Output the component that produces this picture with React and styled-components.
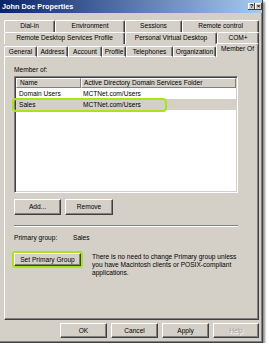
import React from 'react';
import styled, { createGlobalStyle } from 'styled-components';

const Global = createGlobalStyle`
  html, body { margin: 0; padding: 0; background: #ffffff; }
  body {
    font-family: "Liberation Sans", Arial, sans-serif;
    font-size: 6.6px;
    color: #000;
  }
  * { box-sizing: border-box; }
`;

const Window = styled.div`
  width: 263px;
  height: 343px;
  background: #d4d0c8;
  border-right: 1px solid #404040;
  border-bottom: 1px solid #404040;
  box-shadow: inset -1px -1px 0 #808080, 2px 2px 2px rgba(0, 0, 0, 0.45);
  display: flex;
  flex-direction: column;
`;

const TitleBar = styled.div`
  height: 13px;
  flex: none;
  display: flex;
  align-items: center;
  justify-content: space-between;
  padding: 0 0 0 2px;
  background: linear-gradient(to right, #0a246a, #a6caf0);
`;

const Title = styled.span`
  color: #fff;
  font-weight: bold;
  font-size: 7.3px;
  line-height: 13px;
`;

const CaptionButtons = styled.div`
  display: flex;
`;

const CaptionButton = styled.div`
  width: 7px;
  height: 7px;
  background: #d4d0c8;
  box-shadow: inset -1px -1px 0 #404040, inset 1px 1px 0 #fff;
  font-size: 6px;
  font-weight: bold;
  line-height: 7px;
  text-align: center;
`;

const Body = styled.div`
  flex: 1;
  display: flex;
  flex-direction: column;
  padding: 7px 3px 0 4px;
`;

const TabStrip = styled.div`
  display: flex;
  flex-direction: column;
  width: 255px;
`;

const TabRow = styled.div`
  display: flex;
  height: ${p => p.$h || 12}px;
  align-items: flex-end;
`;

const Tab = styled.div`
  width: ${p => p.$w}px;
  height: ${p => (p.$selected ? 14 : p.$front ? 11 : 12)}px;
  border-top: 1px solid #fff;
  border-left: 1px solid #fff;
  border-right: 1px solid #404040;
  border-bottom: ${p => (p.$front && !p.$selected ? '1px solid #fff' : 'none')};
  border-top-left-radius: 2px;
  border-top-right-radius: 2px;
  box-shadow: inset -1px 0 0 #808080;
  text-align: center;
  line-height: ${p => (p.$selected ? 9 : 10)}px;
  white-space: nowrap;
  overflow: hidden;
  background: #d4d0c8;
`;

const Panel = styled.div`
  width: 255px;
  height: 263px;
  border-left: 1px solid #fff;
  border-right: 1px solid #404040;
  border-bottom: 1px solid #404040;
  box-shadow: inset -1px -1px 0 #808080;
  padding: 8px 20px 0 9px;
  display: flex;
  flex-direction: column;
`;

const Label = styled.div`
  line-height: 9px;
  height: 9px;
`;

const ListWrap = styled.div`
  position: relative;
  margin-top: 2px;
`;

const ListBox = styled.div`
  height: 117px;
  background: #fff;
  border: 1px solid;
  border-color: #808080 #fff #fff #808080;
  box-shadow: inset 1px 1px 0 #404040, inset -1px -1px 0 #d4d0c8;
  padding: 1px;
  display: flex;
  flex-direction: column;
`;

const HeaderRow = styled.div`
  display: flex;
  height: 10px;
  flex: none;
`;

const HeaderCell = styled.div`
  width: ${p => (p.$w ? `${p.$w}px` : 'auto')};
  flex: ${p => (p.$w ? 'none' : '1')};
  background: #d4d0c8;
  border-top: 1px solid #fff;
  border-left: 1px solid #fff;
  border-right: 1px solid #808080;
  border-bottom: 1px solid #808080;
  padding-left: ${p => p.$pad}px;
  line-height: 8px;
  white-space: nowrap;
  overflow: hidden;
`;

const Row = styled.div`
  display: flex;
  height: 11px;
  flex: none;
  background: ${p => (p.$selected ? '#d4d0c8' : 'transparent')};
`;

const Cell = styled.div`
  width: ${p => (p.$w ? `${p.$w}px` : 'auto')};
  flex: ${p => (p.$w ? 'none' : '1')};
  padding-left: ${p => p.$pad}px;
  line-height: 11px;
  white-space: nowrap;
  overflow: hidden;
`;

const Highlight = styled.div`
  position: absolute;
  left: -2px;
  top: 22px;
  width: 155px;
  height: 14px;
  border: 2px solid #a9e31c;
  border-radius: 4px;
  pointer-events: none;
`;

const ButtonRow = styled.div`
  display: flex;
  gap: 4px;
  margin-top: ${p => p.$mt || 0}px;
  justify-content: ${p => (p.$end ? 'flex-end' : 'flex-start')};
`;

const Button = styled.div`
  width: ${p => p.$w || 47}px;
  height: ${p => p.$h || 16}px;
  background: #d4d0c8;
  border: 1px solid;
  border-color: #fff #404040 #404040 #fff;
  box-shadow: inset -1px -1px 0 #808080;
  text-align: center;
  line-height: ${p => (p.$h || 16) - 2}px;
  white-space: nowrap;
  color: ${p => (p.$disabled ? '#a0a0a0' : '#000')};
  text-shadow: ${p => (p.$disabled ? '1px 1px 0 #fff' : 'none')};
`;

const Separator = styled.div`
  height: 2px;
  margin-top: 10px;
  border-top: 1px solid #808080;
  border-bottom: 1px solid #fff;
`;

const InfoRow = styled.div`
  display: flex;
  margin-top: 7px;
  line-height: 8px;
`;

const InfoKey = styled.div`
  width: 59px;
`;

const SetRow = styled.div`
  display: flex;
  align-items: flex-start;
  gap: 9px;
  margin-top: 9px;
  margin-left: -2px;
`;

const Ring = styled.div`
  border: 2px solid #a9e31c;
  border-radius: 3px;
  flex: none;
`;

const Note = styled.div`
  line-height: 8px;
  margin-top: 2px;
  white-space: nowrap;
`;

const tabs1 = [
  ['Dial-in', 51],
  ['Environment', 70],
  ['Sessions', 57],
  ['Remote control', 77],
];
const tabs2 = [
  ['Remote Desktop Services Profile', 121],
  ['Personal Virtual Desktop', 92],
  ['COM+', 42],
];
const tabs3 = [
  ['General', 33],
  ['Address', 31],
  ['Account', 34],
  ['Profile', 24],
  ['Telephones', 47],
  ['Organization', 43],
  ['Member Of', 43, true],
];

export default function App() {
  return (
    <>
      <Global />
      <Window>
        <TitleBar>
          <Title>John Doe Properties</Title>
          <CaptionButtons>
            <CaptionButton>?</CaptionButton>
            <CaptionButton>×</CaptionButton>
          </CaptionButtons>
        </TitleBar>
        <Body>
          <TabStrip>
            <TabRow>
              {tabs1.map(([t, w]) => (
                <Tab key={t} $w={w}>{t}</Tab>
              ))}
            </TabRow>
            <TabRow>
              {tabs2.map(([t, w]) => (
                <Tab key={t} $w={w}>{t}</Tab>
              ))}
            </TabRow>
            <TabRow $h={13}>
              {tabs3.map(([t, w, sel]) => (
                <Tab key={t} $w={w} $front $selected={sel}>{t}</Tab>
              ))}
            </TabRow>
          </TabStrip>
          <Panel>
            <Label>Member of:</Label>
            <ListWrap>
              <ListBox>
                <HeaderRow>
                  <HeaderCell $w={65} $pad={3}>Name</HeaderCell>
                  <HeaderCell $pad={2}>Active Directory Domain Services Folder</HeaderCell>
                </HeaderRow>
                <Row>
                  <Cell $w={65} $pad={3}>Domain Users</Cell>
                  <Cell $pad={2}>MCTNet.com/Users</Cell>
                </Row>
                <Row $selected>
                  <Cell $w={65} $pad={3}>Sales</Cell>
                  <Cell $pad={2}>MCTNet.com/Users</Cell>
                </Row>
              </ListBox>
              <Highlight />
            </ListWrap>
            <ButtonRow $mt={6}>
              <Button $w={47}>Add...</Button>
              <Button $w={48}>Remove</Button>
            </ButtonRow>
            <Separator />
            <InfoRow>
              <InfoKey>Primary group:</InfoKey>
              <span>Sales</span>
            </InfoRow>
            <SetRow>
              <Ring>
                <Button $w={67} $h={13}>Set Primary Group</Button>
              </Ring>
              <Note>
                There is no need to change Primary group unless
                <br />
                you have Macintosh clients or POSIX-compliant
                <br />
                applications.
              </Note>
            </SetRow>
          </Panel>
          <ButtonRow $mt={3} $end>
            <Button $w={47} $h={15}>OK</Button>
            <Button $w={47} $h={15}>Cancel</Button>
            <Button $w={47} $h={15}>Apply</Button>
            <Button $w={46} $h={15} $disabled>Help</Button>
          </ButtonRow>
        </Body>
      </Window>
    </>
  );
}
